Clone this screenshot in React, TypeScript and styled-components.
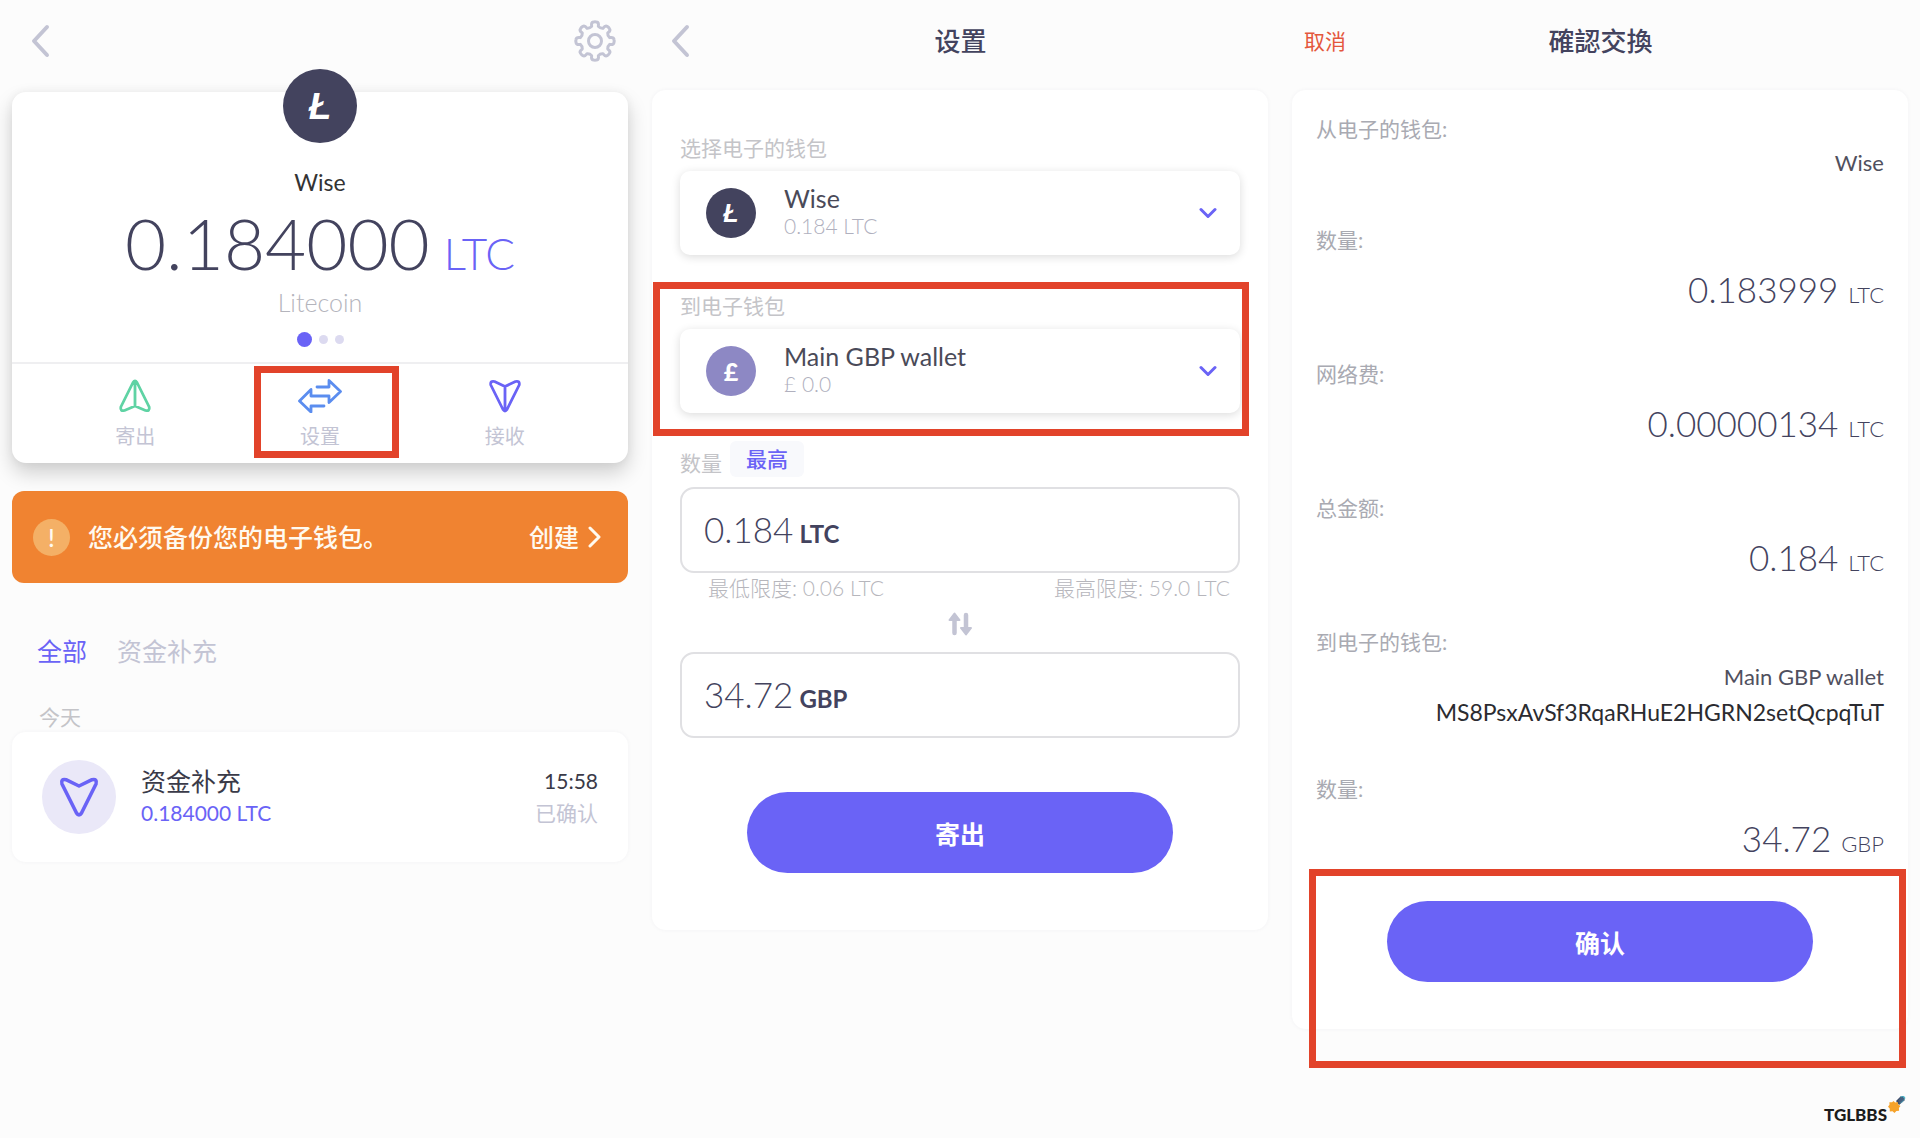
import React, { useState } from "react";
import styled, { createGlobalStyle, css } from "styled-components";

const latin = `Lato, "Noto Sans CJK SC", sans-serif`;

const color = {
  page: "#fcfcfc",
  ink: "#43435e",
  dark: "#3a3a48",
  muted: "#c3c4d4",
  label: "#c4c4c8",
  caption: "#a9aab2",
  brand: "#6a63f6",
  mark: "#e2432a",
};

const GlobalStyle = createGlobalStyle`
  *, *::before, *::after { box-sizing: border-box; }
  body { margin: 0; background: ${color.page}; font-family: ${latin}; color: ${color.dark}; }
  button, input, select { font: inherit; color: inherit; margin: 0; padding: 0; border: 0; background: none; outline: none; }
  button { cursor: pointer; }
  p, h1, h2, dl, dd { margin: 0; }
`;

const Page = styled.div`
  display: grid;
  grid-template-columns: repeat(3, minmax(0, 1fr));
  min-height: 100vh;
`;

const Screen = styled.section`
  display: flex;
  flex-direction: column;
  padding: 0 12px;
`;

const Header = styled.header`
  display: grid;
  grid-template-columns: 1fr auto 1fr;
  align-items: center;
  height: 82px;
  padding: 0 11px 0 12px;
`;

const Title = styled.h1<{ $traditional?: boolean }>`
  font-size: 26px;
  line-height: 36px;
  font-weight: 500;
  color: ${color.ink};
  ${(p) => p.$traditional && css`font-family: Lato, "Noto Sans CJK TC", sans-serif;`}
`;

const IconButton = styled.button<{ $end?: boolean }>`
  display: inline-flex;
  color: ${color.muted};
  justify-self: ${(p) => (p.$end ? "end" : "start")};
`;

const CancelButton = styled.button`
  justify-self: start;
  font-size: 21px;
  line-height: 28px;
  color: #e4573d;
`;

const Card = styled.div`
  border-radius: 14px;
  background: #fff;
  box-shadow: 0 0 4px rgba(60, 60, 90, 0.05);
`;

/* Wallet */
const WalletCard = styled(Card)`
  position: relative;
  display: flex;
  flex-direction: column;
  align-items: center;
  margin-top: 10px;
  padding-top: 74px;
  box-shadow: 0 10px 20px rgba(0, 0, 0, 0.18), 0 0 10px rgba(0, 0, 0, 0.05);
`;

const Coin = styled.span<{ $size: number; $tone: string; $slant?: boolean }>`
  display: flex;
  flex: none;
  align-items: center;
  justify-content: center;
  width: ${(p) => p.$size}px;
  height: ${(p) => p.$size}px;
  border-radius: 50%;
  background: ${(p) => p.$tone};
  color: #fff;
  font-size: ${(p) => p.$size / 2}px;
  line-height: 1;
  font-weight: 900;
  ${(p) => p.$slant && css`font-family: "Liberation Sans", sans-serif; font-style: italic;`}
`;

const CoinBadge = styled.div`
  position: absolute;
  top: -23px;
  left: 0;
  right: 0;
  display: flex;
  justify-content: center;
`;

const WalletName = styled.h2`
  font-size: 23px;
  line-height: 32px;
  font-weight: 400;
  color: #333;
`;

const Balance = styled.p`
  font-size: 71px;
  line-height: 90px;
  font-weight: 300;
  color: ${color.ink};
`;

const BalanceUnit = styled.span`
  margin-left: 14px;
  font-size: 44px;
  line-height: 1;
  color: ${color.brand};
`;

const CoinName = styled.p`
  font-size: 25px;
  line-height: 28px;
  font-weight: 300;
  color: #b4b4bc;
`;

const Dots = styled.div`
  display: flex;
  align-items: center;
  gap: 7px;
  height: 16px;
  margin: 15px 0;
`;

const Dot = styled.span<{ $active?: boolean }>`
  width: ${(p) => (p.$active ? 15 : 9)}px;
  height: ${(p) => (p.$active ? 15 : 9)}px;
  border-radius: 50%;
  background: ${(p) => (p.$active ? color.brand : "#dcdaf0")};
`;

const Actions = styled.div`
  display: grid;
  grid-template-columns: repeat(3, 1fr);
  align-self: stretch;
  padding: 0 5%;
  border-top: 2px solid #efeff1;
`;

const ActionCell = styled.div`
  position: relative;
  display: flex;
  justify-content: center;
`;

const ActionButton = styled.button`
  display: flex;
  flex-direction: column;
  align-items: center;
  gap: 9px;
  height: 99px;
  padding-top: 15px;
  font-size: 20px;
  line-height: 28px;
  color: ${color.muted};
`;

const Highlight = styled.span<{ $inset: string }>`
  position: absolute;
  inset: ${(p) => p.$inset};
  border: 7px solid ${color.mark};
  pointer-events: none;
`;

const Banner = styled.div`
  display: flex;
  align-items: center;
  gap: 18px;
  height: 92px;
  margin-top: 28px;
  padding: 0 26px 0 21px;
  border-radius: 12px;
  background: #f08331;
  color: #fffaf0;
  font-size: 25px;
  line-height: 36px;
  font-weight: 500;
`;

const Alert = styled.span`
  display: flex;
  align-items: center;
  justify-content: center;
  width: 37px;
  height: 37px;
  border-radius: 50%;
  background: #f4b066;
`;

const BannerAction = styled.button`
  display: flex;
  align-items: center;
  gap: 9px;
  margin-left: auto;
`;

const Tabs = styled.nav`
  display: flex;
  gap: 30px;
  margin-top: 50px;
  padding-left: 25px;
`;

const Tab = styled.button<{ $active?: boolean }>`
  font-size: 25px;
  line-height: 36px;
  color: ${(p) => (p.$active ? color.brand : color.muted)};
`;

const Day = styled.p`
  margin: 34px 0 1px;
  padding-left: 27px;
  font-size: 21px;
  line-height: 28px;
  color: ${color.label};
`;

const Transaction = styled(Card)`
  display: flex;
  align-items: center;
  gap: 25px;
  height: 130px;
  padding: 0 30px;
`;

const TransactionIcon = styled.span`
  display: flex;
  align-items: center;
  justify-content: center;
  width: 74px;
  height: 74px;
  border-radius: 50%;
  background: #eae8f8;
`;

const Lines = styled.div<{ $end?: boolean }>`
  display: flex;
  flex-direction: column;
  ${(p) => p.$end && css`margin-left: auto; align-items: flex-end;`}
`;

const TransactionTitle = styled.span`
  font-size: 25px;
  line-height: 32px;
`;

const Small = styled.span<{ $tone: string }>`
  font-size: 21px;
  line-height: 32px;
  color: ${(p) => p.$tone};
`;

/* Exchange form */
const FormCard = styled(Card).attrs({ as: "form" })`
  display: flex;
  flex-direction: column;
  margin-top: 8px;
  padding: 44px 28px 57px;
`;

const Group = styled.div`
  position: relative;
  display: flex;
  flex-direction: column;
  & + & { margin-top: 37px; }
`;

const Label = styled.label`
  font-size: 21px;
  line-height: 28px;
  color: ${color.label};
`;

const SelectBox = styled.div`
  position: relative;
  display: flex;
  align-items: center;
  gap: 28px;
  height: 84px;
  margin-top: 9px;
  padding: 0 23px 0 26px;
  border-radius: 10px;
  background: #fff;
  box-shadow: 0 2px 10px rgba(0, 0, 0, 0.14);
`;

const SelectLines = styled.div`
  display: flex;
  flex: 1;
  flex-direction: column;
  padding-bottom: 5px;
  font-size: 21px;
  line-height: 26px;
  font-weight: 300;
  color: #b0b0be;
`;

const Select = styled.select`
  appearance: none;
  height: 30px;
  font-size: 25px;
  font-weight: 400;
  color: #4a4a58;
`;

const AmountHead = styled.div`
  display: flex;
  align-items: flex-end;
  gap: 8px;
  margin: 28px 0 10px;
`;

const MaxButton = styled.button`
  height: 36px;
  padding: 0 16px;
  border-radius: 6px;
  background: #f8f9fc;
  font-size: 21px;
  line-height: 36px;
  font-weight: 500;
  color: ${color.brand};
`;

const AmountBox = styled.div`
  display: flex;
  align-items: baseline;
  gap: 6px;
  height: 86px;
  padding: 17px 22px;
  border: 2px solid #e0e0e3;
  border-radius: 14px;
  color: ${color.ink};
`;

const AmountInput = styled.input`
  field-sizing: content;
  height: 46px;
  font-size: 35px;
  line-height: 46px;
  font-weight: 300;
`;

const Unit = styled.span`
  font-size: 24px;
  font-weight: 700;
`;

const Limits = styled.div`
  display: flex;
  justify-content: space-between;
  margin-top: 1px;
  padding: 0 10px 0 28px;
  font-size: 21px;
  line-height: 28px;
  font-weight: 300;
  color: #b6b6bc;
`;

const SwapButton = styled.button`
  display: flex;
  align-items: center;
  justify-content: center;
  align-self: center;
  width: 40px;
  height: 28px;
  margin: 8px 0 14px;
  color: ${color.muted};
`;

const PrimaryButton = styled.button`
  width: 426px;
  max-width: 100%;
  height: 81px;
  border-radius: 41px;
  background: ${color.brand};
  color: #fff;
  font-size: 25px;
  font-weight: 700;
`;

const Submit = styled.div`
  position: relative;
  display: flex;
  justify-content: center;
  margin-top: 54px;
`;

/* Confirmation */
const ConfirmCard = styled(Card)`
  margin-top: 8px;
  padding: 25px 24px 47px;
`;

const Summary = styled.dl`
  display: flex;
  flex-direction: column;
  gap: 49px;
`;

const SummaryRow = styled.div<{ $gap: number }>`
  display: flex;
  flex-direction: column;
  gap: ${(p) => p.$gap}px;
`;

const Term = styled.dt`
  font-size: 21px;
  line-height: 28px;
  color: ${color.caption};
`;

const TextValue = styled.dd<{ $strong?: boolean }>`
  text-align: right;
  font-size: ${(p) => (p.$strong ? 23 : 22)}px;
  line-height: 28px;
  overflow-wrap: anywhere;
  color: ${(p) => (p.$strong ? "#2b2b30" : "#50505e")};
`;

const NumberValue = styled.dd`
  text-align: right;
  font-size: 35px;
  line-height: 44px;
  font-weight: 300;
  color: ${color.ink};
`;

const NumberUnit = styled.span`
  margin-left: 10px;
  font-size: 22px;
  line-height: 1;
`;

const Confirm = styled(Submit)`
  margin-top: 41px;
`;

const Brand = styled.footer`
  display: flex;
  align-items: flex-end;
  justify-content: flex-end;
  margin-top: auto;
  padding: 0 2px 13px;
  font-size: 17px;
  line-height: 20px;
  font-weight: 900;
  color: #1c1c1c;
`;

const Spark = styled.svg`
  margin-bottom: 11px;
`;

const Stroke = (p: React.SVGProps<SVGSVGElement>) => (
  <svg fill="none" stroke="currentColor" strokeLinecap="round" strokeLinejoin="round" aria-hidden="true" {...p} />
);

const BackIcon = () => (
  <Stroke width="32" height="36" viewBox="0 0 32 36" strokeWidth="4">
    <path d="M23 4 10 18l13 14" />
  </Stroke>
);

const gearPath = (() => {
  const pts: string[] = [];
  const at = (r: number, deg: number) => {
    const a = (deg * Math.PI) / 180;
    return `${(22 + r * Math.sin(a)).toFixed(2)} ${(22 - r * Math.cos(a)).toFixed(2)}`;
  };
  for (let i = 0; i < 8; i++) {
    const d = i * 45;
    pts.push(`${i ? "L" : "M"}${at(15, d - 13)}Q${at(19, d - 12)} ${at(19, d - 5)}`);
    pts.push(`Q${at(19.5, d)} ${at(19, d + 5)}Q${at(19, d + 12)} ${at(15, d + 13)}`);
    pts.push(`Q${at(13.5, d + 22.5)} ${at(15, d + 32)}`);
  }
  return pts.join("") + "Z";
})();

const GearIcon = () => (
  <Stroke width="44" height="44" viewBox="0 0 44 44" strokeWidth="3">
    <path d={gearPath} />
    <circle cx="22" cy="22" r="6.5" />
  </Stroke>
);

const SendIcon = () => (
  <Stroke width="34" height="34" viewBox="0 0 34 34" strokeWidth="2.8" color="#5fd3a4">
    <path d="M15 3.5Q17 0.500 19 3.500L31.200 28Q32 32.500 27.500 31.500L17 27 6.500 31.500Q2 32.500 2.800 28ZM17 3V27" />
  </Stroke>
);

const ReceiveIcon = () => (
  <Stroke width="34" height="34" viewBox="0 0 34 34" strokeWidth="2.8" color={color.brand}>
    <path d="M15 30.500Q17 33.500 19 30.500L31.200 6Q32 1.500 27.500 2.500L17 7.500 6.500 2.500Q2 1.500 2.800 6ZM17 8V31" />
  </Stroke>
);

const DepositIcon = () => (
  <Stroke width="40" height="40" viewBox="0 0 40 40" strokeWidth="3.6" color={color.brand}>
    <path d="M17.500 36Q20 40 22.500 36L37 7Q38.500 1.500 33 2.700L20 9 7 2.700Q1.500 1.500 3 7Z" />
  </Stroke>
);

const ExchangeIcon = () => (
  <Stroke width="44" height="34" viewBox="0 0 44 34" strokeWidth="2.8" color="#5b8def">
    <path d="M19 8H31V1.500L42.500 12.500 31 23.500V17H13V10.500L1.500 22 13 33V27H26" />
  </Stroke>
);

const ChevronRight = () => (
  <Stroke width="14" height="24" viewBox="0 0 14 24" strokeWidth="3">
    <path d="M2 3l9 9-9 9" />
  </Stroke>
);

const ChevronDown = () => (
  <Stroke width="18" height="12" viewBox="0 0 18 12" strokeWidth="3" color={color.brand}>
    <path d="M2 2.500l7 7 7-7" />
  </Stroke>
);

const SwapIcon = () => (
  <Stroke width="26" height="24" viewBox="0 0 26 24" strokeWidth="4.5">
    <path d="M7.500 21V5M19 3V18" />
    <path fill="currentColor" strokeWidth="2" d="M2.500 8l5-6.500 5 6.500ZM14 16l5 6.500 5-6.500Z" />
  </Stroke>
);

const SparkIcon = () => (
  <Spark width="19" height="18" viewBox="0 0 19 18" aria-hidden="true">
    <path d="M9 5 14 0 18 4 12 9Z" fill="#3d4a68" />
    <path d="M14 0 17 0 18.500 2 15 6.500 12.500 7.500Z" fill="#4fb3c6" />
    <path d="M13 2 15.500 0.500 17.500 3 13.500 7 11 5Z" fill="#46607f" />
    <path d="M6.500 5l1.600 1.600 2.600-.6.500 2.600 2.300 1.400-1.600 2 .2 2.700-2.700.2-1.900 2-2-1.700-2.700.2-.1-2.800L1 10.800l1.500-2-.1-2.600 2.700.1Z" fill="#f6a32b" />
  </Spark>
);

const litecoin = <Coin $size={50} $tone={color.ink} $slant aria-hidden="true">Ł</Coin>;
const pound = <Coin $size={50} $tone="#8d88c4" aria-hidden="true">£</Coin>;

function WalletSelect(props: { id: string; label: string; name: string; balance: string; coin: React.ReactNode; marked?: boolean }) {
  return (
    <Group>
      <Label htmlFor={props.id}>{props.label}</Label>
      <SelectBox>
        {props.coin}
        <SelectLines>
          <Select id={props.id}>
            <option>{props.name}</option>
          </Select>
          <span>{props.balance}</span>
        </SelectLines>
        <ChevronDown />
      </SelectBox>
      {props.marked && <Highlight $inset="-10px -9px -23px -27px" />}
    </Group>
  );
}

function WalletScreen() {
  return (
    <Screen>
      <Header>
        <IconButton aria-label="返回"><BackIcon /></IconButton>
        <span />
        <IconButton $end aria-label="选项"><GearIcon /></IconButton>
      </Header>
      <WalletCard>
        <CoinBadge><Coin $size={74} $tone={color.ink} $slant aria-hidden="true">Ł</Coin></CoinBadge>
        <WalletName>Wise</WalletName>
        <Balance>0.184000<BalanceUnit>LTC</BalanceUnit></Balance>
        <CoinName>Litecoin</CoinName>
        <Dots><Dot $active /><Dot /><Dot /></Dots>
        <Actions>
          <ActionCell><ActionButton><SendIcon />寄出</ActionButton></ActionCell>
          <ActionCell>
            <ActionButton><ExchangeIcon />设置</ActionButton>
            <Highlight $inset="2px 13px 5px 26px" />
          </ActionCell>
          <ActionCell><ActionButton><ReceiveIcon />接收</ActionButton></ActionCell>
        </Actions>
      </WalletCard>
      <Banner>
        <Alert>!</Alert>
        <span>您必须备份您的电子钱包。</span>
        <BannerAction>创建<ChevronRight /></BannerAction>
      </Banner>
      <Tabs>
        <Tab $active>全部</Tab>
        <Tab>资金补充</Tab>
      </Tabs>
      <Day>今天</Day>
      <Transaction>
        <TransactionIcon><DepositIcon /></TransactionIcon>
        <Lines>
          <TransactionTitle>资金补充</TransactionTitle>
          <Small $tone={color.brand}>0.184000 LTC</Small>
        </Lines>
        <Lines $end>
          <Small $tone={color.dark}>15:58</Small>
          <Small $tone={color.muted}>已确认</Small>
        </Lines>
      </Transaction>
    </Screen>
  );
}

function ExchangeScreen() {
  const [from, setFrom] = useState("0.184");
  const [to, setTo] = useState("34.72");
  return (
    <Screen>
      <Header>
        <IconButton aria-label="返回"><BackIcon /></IconButton>
        <Title>设置</Title>
      </Header>
      <FormCard>
        <WalletSelect id="from" label="选择电子的钱包" name="Wise" balance="0.184 LTC" coin={litecoin} />
        <WalletSelect id="to" label="到电子钱包" name="Main GBP wallet" balance="£ 0.0" coin={pound} marked />
        <AmountHead>
          <Label htmlFor="amount">数量</Label>
          <MaxButton type="button">最高</MaxButton>
        </AmountHead>
        <AmountBox>
          <AmountInput id="amount" size={5} value={from} onChange={(e) => setFrom(e.target.value)} />
          <Unit>LTC</Unit>
        </AmountBox>
        <Limits><span>最低限度: 0.06 LTC</span><span>最高限度: 59.0 LTC</span></Limits>
        <SwapButton type="button" aria-label="交换"><SwapIcon /></SwapButton>
        <AmountBox>
          <AmountInput aria-label="GBP" size={5} value={to} onChange={(e) => setTo(e.target.value)} />
          <Unit>GBP</Unit>
        </AmountBox>
        <Submit><PrimaryButton type="button">寄出</PrimaryButton></Submit>
      </FormCard>
    </Screen>
  );
}

function NumberRow(props: { label: string; value: string; unit: string }) {
  return (
    <SummaryRow $gap={13}>
      <Term>{props.label}</Term>
      <NumberValue>{props.value}<NumberUnit>{props.unit}</NumberUnit></NumberValue>
    </SummaryRow>
  );
}

function ConfirmScreen() {
  return (
    <Screen>
      <Header>
        <CancelButton>取消</CancelButton>
        <Title $traditional lang="zh-Hant">確認交換</Title>
      </Header>
      <ConfirmCard>
        <Summary>
          <SummaryRow $gap={6}>
            <Term>从电子的钱包:</Term>
            <TextValue>Wise</TextValue>
          </SummaryRow>
          <NumberRow label="数量:" value="0.183999" unit="LTC" />
          <NumberRow label="网络费:" value="0.00000134" unit="LTC" />
          <NumberRow label="总金额:" value="0.184" unit="LTC" />
          <SummaryRow $gap={7}>
            <Term>到电子的钱包:</Term>
            <TextValue>Main GBP wallet</TextValue>
            <TextValue $strong>MS8PsxAvSf3RqaRHuE2HGRN2setQcpqTuT</TextValue>
          </SummaryRow>
          <NumberRow label="数量:" value="34.72" unit="GBP" />
        </Summary>
        <Confirm>
          <PrimaryButton>确认</PrimaryButton>
          <Highlight $inset="-32px -22px -86px -7px" />
        </Confirm>
      </ConfirmCard>
      <Brand>TGLBBS<SparkIcon /></Brand>
    </Screen>
  );
}

export default function App() {
  return (
    <>
      <GlobalStyle />
      <Page>
        <WalletScreen />
        <ExchangeScreen />
        <ConfirmScreen />
      </Page>
    </>
  );
}
